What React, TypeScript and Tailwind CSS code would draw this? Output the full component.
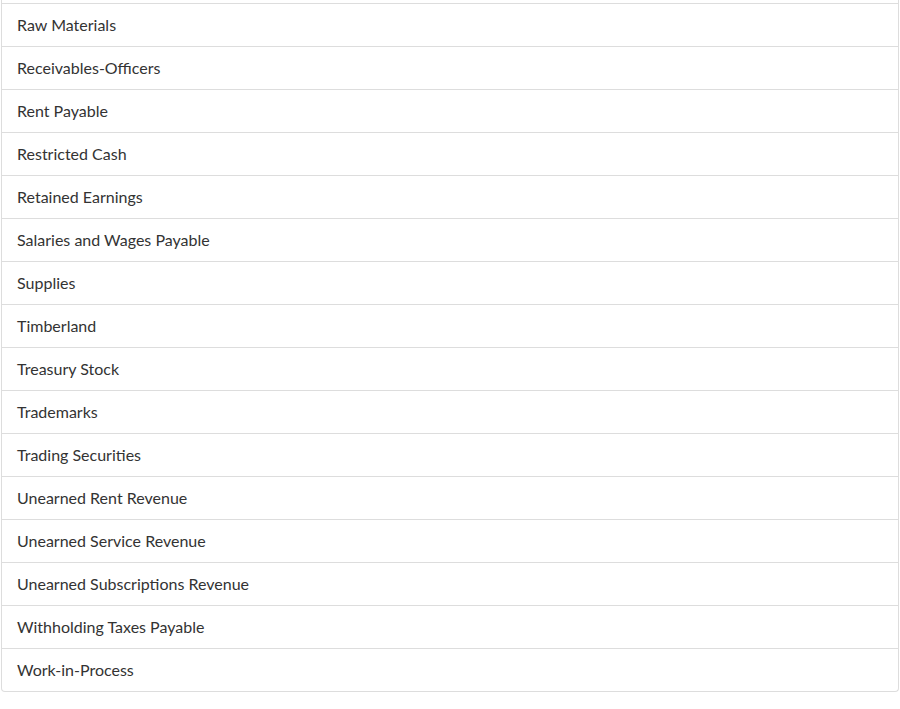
import React from "react";

const accounts = [
  "Raw Materials",
  "Receivables-Officers",
  "Rent Payable",
  "Restricted Cash",
  "Retained Earnings",
  "Salaries and Wages Payable",
  "Supplies",
  "Timberland",
  "Treasury Stock",
  "Trademarks",
  "Trading Securities",
  "Unearned Rent Revenue",
  "Unearned Service Revenue",
  "Unearned Subscriptions Revenue",
  "Withholding Taxes Payable",
  "Work-in-Process",
];

export default function App() {
  return (
    <div className="min-h-[709px] bg-white font-['Lato','Liberation_Sans',sans-serif] text-[#333333]">
      {/* list is scrolled, top item above is out of view */}
      <div className="ml-[1px] w-[898px] border-x border-b border-[#dddddd] rounded-b-[4px]">
        <div className="h-[3px]" />
        {accounts.map((name) => (
          <div
            key={name}
            className="h-[43px] border-t border-[#dddddd] px-[15px] pt-[11px] text-[16px] leading-[20px]"
          >
            {name}
          </div>
        ))}
      </div>
    </div>
  );
}
